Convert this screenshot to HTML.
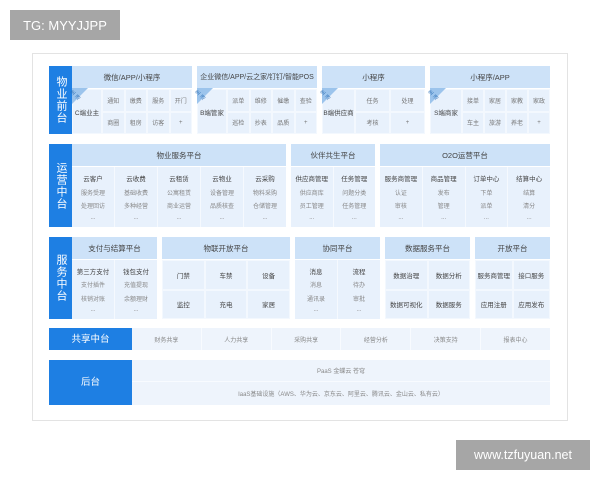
<!DOCTYPE html><html><head><meta charset="utf-8"><style>
*{margin:0;padding:0;box-sizing:border-box}
body{width:600px;height:480px;background:#fff;position:relative;overflow:hidden;font-family:"Liberation Sans","Noto Sans CJK SC",sans-serif;color:#555}
.a{position:absolute}
.card{left:32px;top:53px;width:536px;height:368px;border:1px solid #e3e3e3;background:#fff}
.lab{background:#1e7fe3;color:#fff;font-size:10px;display:flex;align-items:center;justify-content:center;text-align:center;line-height:11px}
.v{writing-mode:vertical-rl;letter-spacing:1px;font-size:11px}
.box{background:#e8f1fc;display:flex;flex-direction:column}
.hd{height:22px;background:#cde2f8;display:flex;align-items:center;justify-content:center;font-size:7.5px;color:#444;flex:none}
.bd{flex:1;display:flex;border-top:1px solid #fff}
.col{flex:1;display:flex;flex-direction:column;align-items:center;justify-content:space-around;border-left:1px solid #f5f9fe;font-size:6px;color:#888;padding:4px 0}
.col:first-child{border-left:none}
.col b{font-weight:normal;color:#444;font-size:6.5px}
.g{display:grid;flex:1;border-top:1px solid #fff}
.g div{display:flex;align-items:center;justify-content:center;font-size:6px;color:#777;border:0.5px solid #f3f8fe}
.g .d{color:#444;font-size:6.5px}
.tag{position:absolute;left:0;top:22px;width:0;height:0;border-top:16px solid #9cc4ec;border-right:16px solid transparent}
.tag span{position:absolute;left:1px;top:-16px;font-size:5px;color:#2d6fb5;transform:rotate(-45deg)}
</style></head><body>
<div class="a" style="left:10px;top:10px;width:110px;height:30px;background:#a6a6a6;color:#fff;font-size:13px;display:flex;align-items:center;justify-content:center">TG: MYYJJPP</div>
<div class="a" style="left:456px;top:440px;width:134px;height:30px;background:#a6a6a6;color:#fff;font-size:12.5px;display:flex;align-items:center;justify-content:center">www.tzfuyuan.net</div>
<div class="a card"></div>

<div class="a lab v" style="left:49px;top:66px;width:23px;height:68px">物业前台</div>
<div class="a box" style="left:72px;top:66px;width:120px;height:68px"><div class="hd">微信/APP/小程序</div>
<div class="g" style="grid-template-columns:30px 1fr 1fr 1fr 1fr"><div class="d" style="grid-row:1/3">C端业主</div><div>通知</div><div>缴费</div><div>服务</div><div>开门</div><div>商圈</div><div>租房</div><div>访客</div><div>+</div></div><div class="tag"><span>生活</span></div></div>
<div class="a box" style="left:197px;top:66px;width:120px;height:68px"><div class="hd" style="font-size:7px">企业微信/APP/云之家/钉钉/智能POS</div>
<div class="g" style="grid-template-columns:30px 1fr 1fr 1fr 1fr"><div class="d" style="grid-row:1/3">B端管家</div><div>派单</div><div>维修</div><div>催缴</div><div>查验</div><div>巡检</div><div>抄表</div><div>品质</div><div>+</div></div><div class="tag"><span>生活</span></div></div>
<div class="a box" style="left:322px;top:66px;width:103px;height:68px"><div class="hd">小程序</div>
<div class="g" style="grid-template-columns:33px 1fr 1fr"><div class="d" style="grid-row:1/3">B端供应商</div><div>任务</div><div>处理</div><div>考核</div><div>+</div></div><div class="tag"><span>生活</span></div></div>
<div class="a box" style="left:430px;top:66px;width:120px;height:68px"><div class="hd">小程序/APP</div>
<div class="g" style="grid-template-columns:32px 1fr 1fr 1fr 1fr"><div class="d" style="grid-row:1/3">S端商家</div><div>接单</div><div>家居</div><div>家教</div><div>家政</div><div>车主</div><div>旅游</div><div>养老</div><div>+</div></div><div class="tag"><span>生活</span></div></div>

<div class="a lab v" style="left:49px;top:144px;width:23px;height:83px">运营中台</div>
<div class="a box" style="left:72px;top:144px;width:214px;height:83px"><div class="hd">物业服务平台</div><div class="bd">
<div class="col"><b>云客户</b><span>服务受理</span><span>处理回访</span><span>...</span></div>
<div class="col"><b>云收费</b><span>基础收费</span><span>多种经营</span><span>...</span></div>
<div class="col"><b>云租赁</b><span>公寓租赁</span><span>商业运营</span><span>...</span></div>
<div class="col"><b>云物业</b><span>设备管理</span><span>品质核查</span><span>...</span></div>
<div class="col"><b>云采购</b><span>物料采购</span><span>仓储管理</span><span>...</span></div></div></div>
<div class="a box" style="left:291px;top:144px;width:84px;height:83px"><div class="hd">伙伴共生平台</div><div class="bd">
<div class="col"><b>供应商管理</b><span>供应商库</span><span>员工管理</span><span>...</span></div>
<div class="col"><b>任务管理</b><span>问题分类</span><span>任务管理</span><span>...</span></div></div></div>
<div class="a box" style="left:380px;top:144px;width:170px;height:83px"><div class="hd">O2O运营平台</div><div class="bd">
<div class="col"><b>服务商管理</b><span>认证</span><span>审核</span><span>...</span></div>
<div class="col"><b>商品管理</b><span>发布</span><span>管理</span><span>...</span></div>
<div class="col"><b>订单中心</b><span>下单</span><span>派单</span><span>...</span></div>
<div class="col"><b>结算中心</b><span>结算</span><span>清分</span><span>...</span></div></div></div>

<div class="a lab v" style="left:49px;top:237px;width:23px;height:82px">服务中台</div>
<div class="a box" style="left:72px;top:237px;width:85px;height:82px"><div class="hd">支付与结算平台</div><div class="bd">
<div class="col"><b>第三方支付</b><span>支付插件</span><span>核销对账</span><span>...</span></div>
<div class="col"><b>钱包支付</b><span>充值提现</span><span>余额理财</span><span>...</span></div></div></div>
<div class="a box" style="left:162px;top:237px;width:128px;height:82px"><div class="hd">物联开放平台</div>
<div class="g" style="grid-template-columns:1fr 1fr 1fr"><div class="d">门禁</div><div class="d">车禁</div><div class="d">设备</div><div class="d">监控</div><div class="d">充电</div><div class="d">家居</div></div></div>
<div class="a box" style="left:295px;top:237px;width:85px;height:82px"><div class="hd">协同平台</div><div class="bd">
<div class="col"><b>消息</b><span>消息</span><span>通讯录</span><span>...</span></div>
<div class="col"><b>流程</b><span>待办</span><span>审批</span><span>...</span></div></div></div>
<div class="a box" style="left:385px;top:237px;width:85px;height:82px"><div class="hd">数据服务平台</div>
<div class="g" style="grid-template-columns:1fr 1fr"><div class="d">数据治理</div><div class="d">数据分析</div><div class="d">数据可视化</div><div class="d">数据服务</div></div></div>
<div class="a box" style="left:475px;top:237px;width:75px;height:82px"><div class="hd">开放平台</div>
<div class="g" style="grid-template-columns:1fr 1fr"><div class="d">服务商管理</div><div class="d">接口服务</div><div class="d">应用注册</div><div class="d">应用发布</div></div></div>

<div class="a lab" style="left:49px;top:328px;width:83px;height:22px;font-size:9.5px">共享中台</div>
<div class="a" style="left:132px;top:328px;width:418px;height:22px;background:#eef4fc;display:flex;font-size:6px;color:#888">
<div style="flex:1;display:flex;align-items:center;justify-content:center;border-right:1px solid #f8fbff">财务共享</div>
<div style="flex:1;display:flex;align-items:center;justify-content:center;border-right:1px solid #f8fbff">人力共享</div>
<div style="flex:1;display:flex;align-items:center;justify-content:center;border-right:1px solid #f8fbff">采购共享</div>
<div style="flex:1;display:flex;align-items:center;justify-content:center;border-right:1px solid #f8fbff">经营分析</div>
<div style="flex:1;display:flex;align-items:center;justify-content:center;border-right:1px solid #f8fbff">决策支持</div>
<div style="flex:1;display:flex;align-items:center;justify-content:center">报表中心</div></div>

<div class="a lab" style="left:49px;top:360px;width:83px;height:45px;font-size:9.5px">后台</div>
<div class="a" style="left:132px;top:360px;width:418px;height:45px;background:#eef4fc;font-size:6px;color:#888">
<div style="height:22px;display:flex;align-items:center;justify-content:center;border-bottom:1px solid #f8fbff">PaaS 金蝶云 苍穹</div>
<div style="height:23px;display:flex;align-items:center;justify-content:center">IaaS基础设施（AWS、华为云、京东云、阿里云、腾讯云、金山云、私有云）</div></div>
</body></html>
